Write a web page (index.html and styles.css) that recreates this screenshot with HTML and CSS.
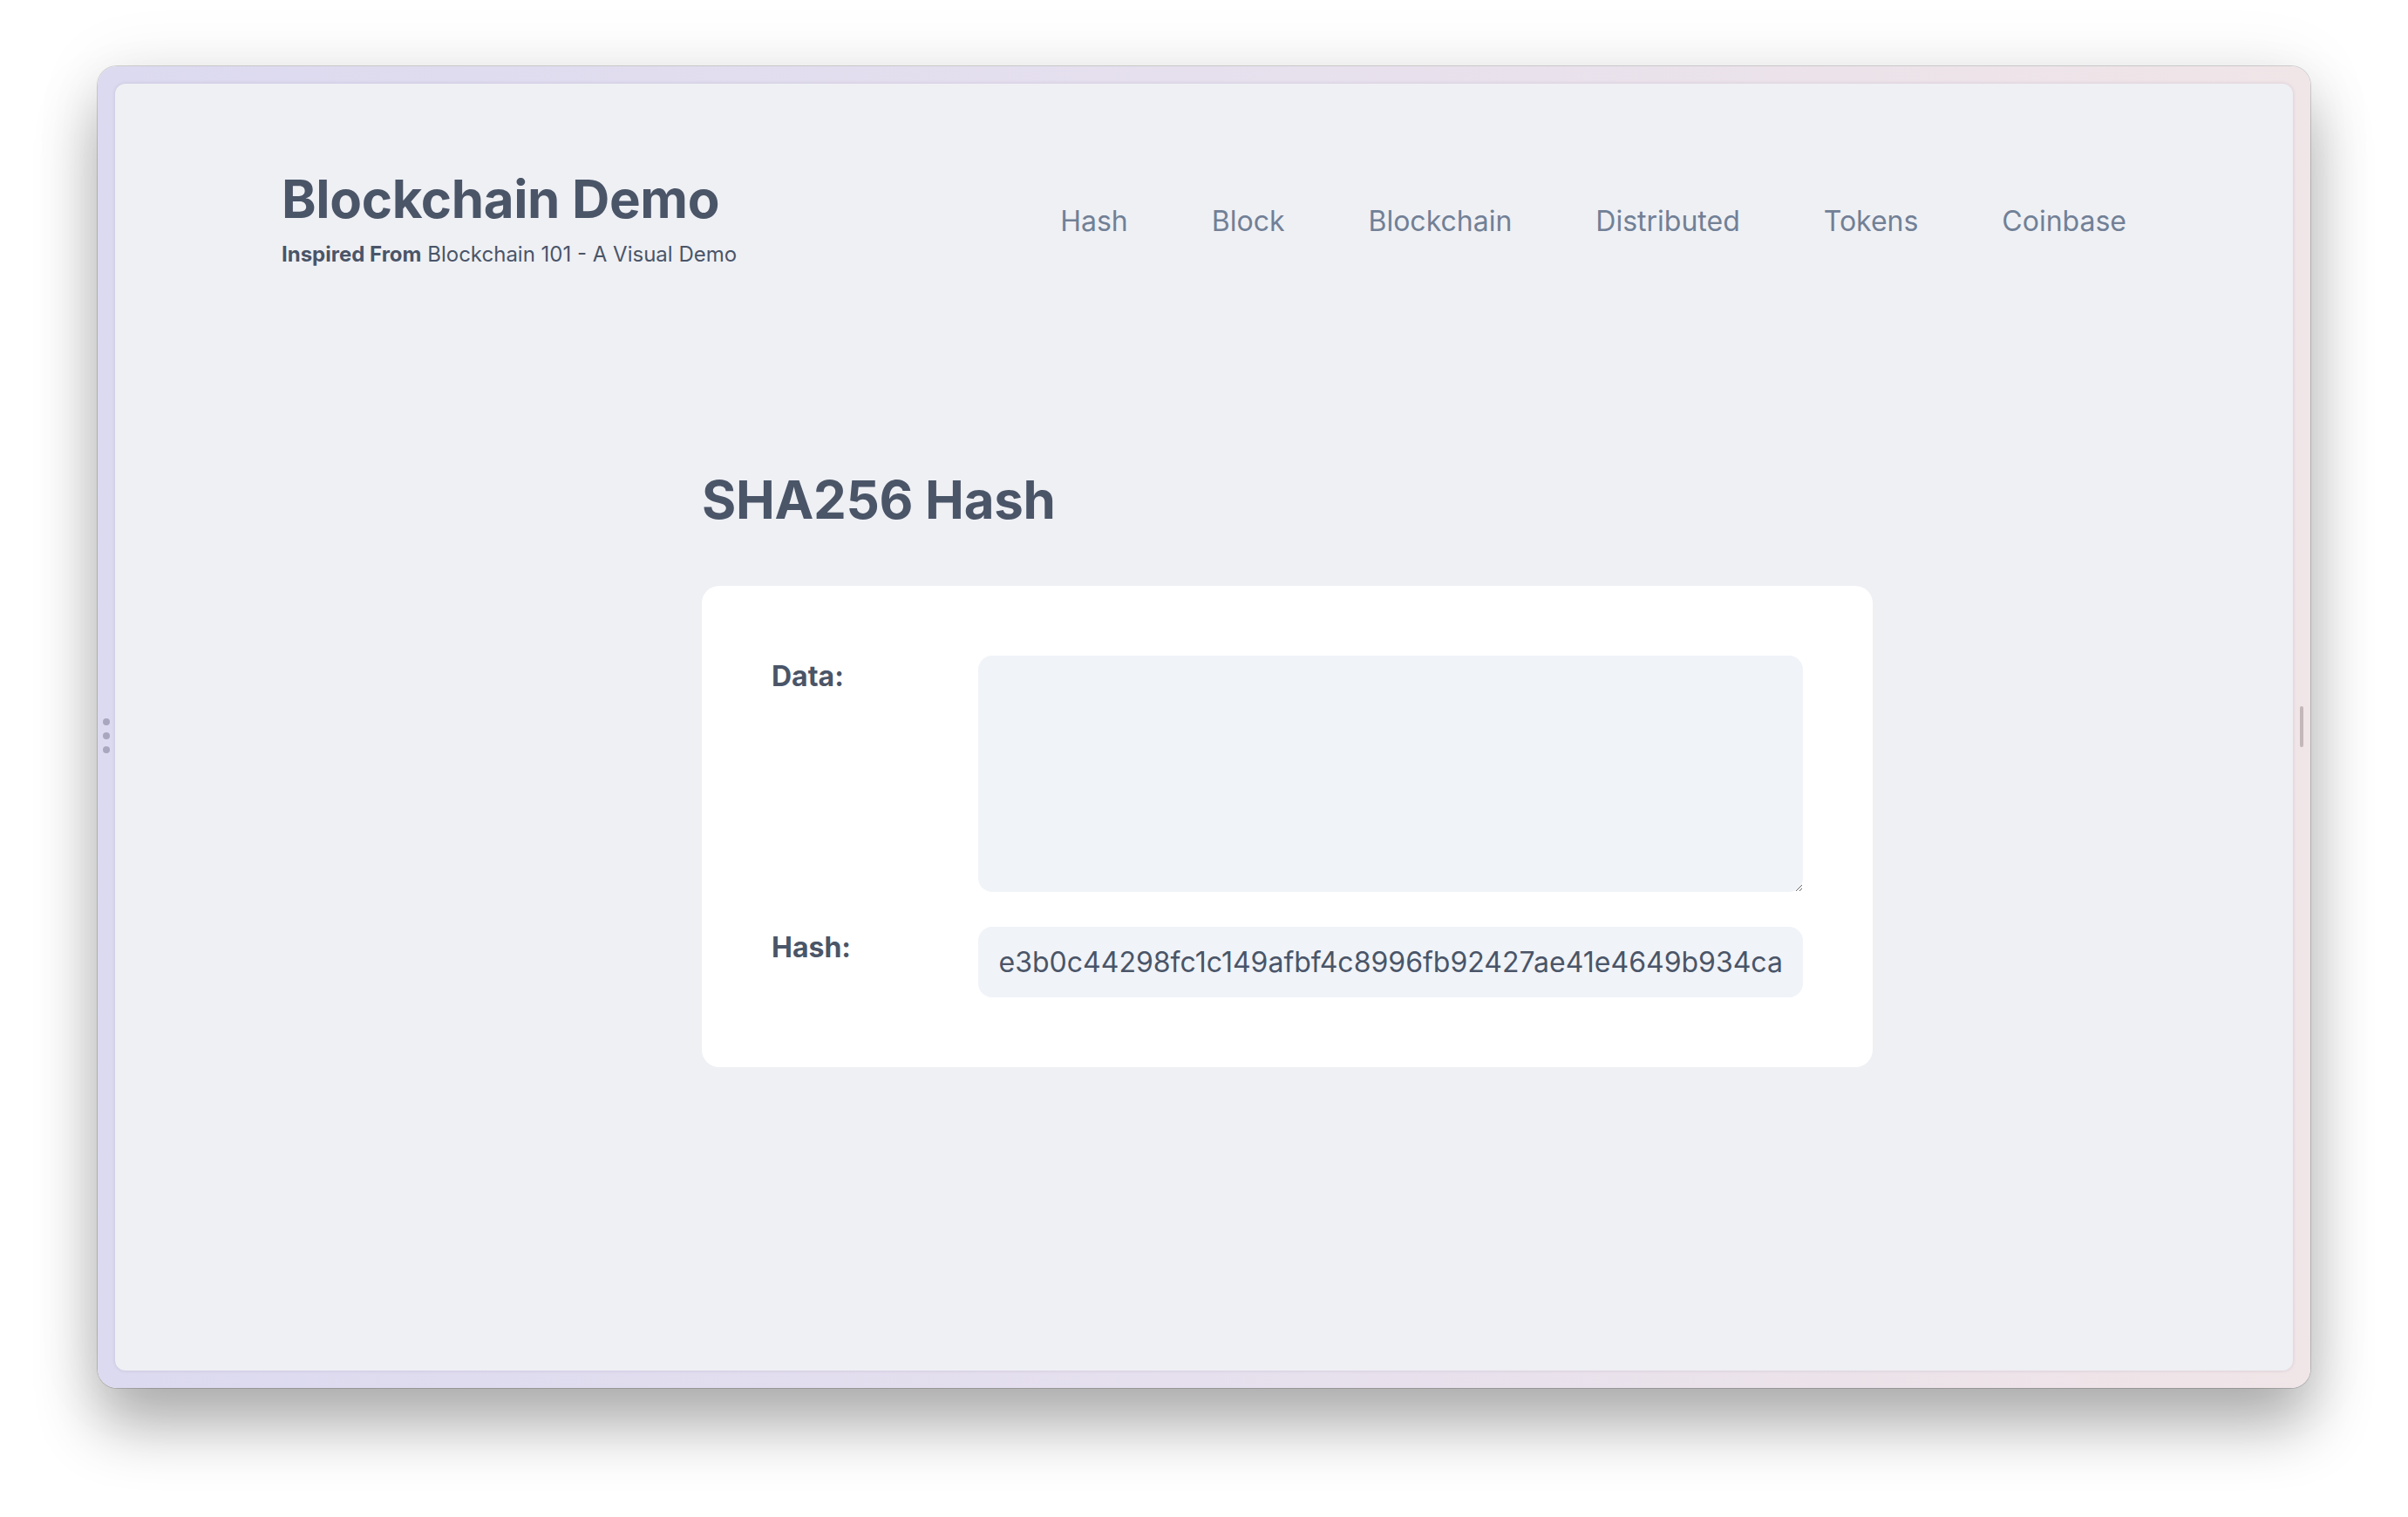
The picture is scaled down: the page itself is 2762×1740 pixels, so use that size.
FILE: index.html
```html
<!DOCTYPE html>
<html lang="en">
<head>
<meta charset="utf-8">
<title>Blockchain Demo</title>
<link rel="stylesheet" href="styles.css">
</head>
<body>
<div class="stage">
  <div class="frame">
    <div class="grip-left"><span></span><span></span><span></span></div>
    <div class="grip-right"></div>
    <div class="window">
      <div class="container">
        <header class="header">
          <div class="brand">
            <h1 class="brand-title">Blockchain Demo</h1>
            <p class="brand-sub"><strong>Inspired From</strong> Blockchain 101 - A Visual Demo</p>
          </div>
          <nav class="nav">
            <a class="nav-link">Hash</a>
            <a class="nav-link">Block</a>
            <a class="nav-link">Blockchain</a>
            <a class="nav-link">Distributed</a>
            <a class="nav-link">Tokens</a>
            <a class="nav-link">Coinbase</a>
          </nav>
        </header>
        <main class="main">
          <h2 class="page-title">SHA256 Hash</h2>
          <div class="card">
            <label class="field-label" for="data">Data:</label>
            <textarea class="field-area" id="data"></textarea>
            <label class="field-label" for="hash">Hash:</label>
            <input class="field-input" id="hash" type="text" value="e3b0c44298fc1c149afbf4c8996fb92427ae41e4649b934ca495991b7852b855">
          </div>
        </main>
      </div>
    </div>
  </div>
</div>
</body>
</html>
```

FILE: styles.css
```css
html, body {
  margin: 0;
  padding: 0;
  background: #ffffff;
}

body {
  font-family: Inter, "Noto Sans", "Liberation Sans", sans-serif;
  color: #4a5568;
}

.stage {
  width: 2762px;
  height: 1740px;
  box-sizing: border-box;
  padding: 76px 0 0 112px;
  overflow: hidden;
}

.frame {
  position: relative;
  width: 2538px;
  height: 1516px;
  box-sizing: border-box;
  padding: 20px;
  border-radius: 22px;
  background: linear-gradient(90deg, #dcdaf0 0%, #e6e0ee 50%, #f0e5e7 100%);
  box-shadow:
    0 0 0 1px rgba(0, 0, 0, 0.16),
    0 44px 70px rgba(0, 0, 0, 0.30),
    0 0 80px rgba(0, 0, 0, 0.08);
}

.grip-left {
  position: absolute;
  left: 6px;
  top: 748px;
  display: flex;
  flex-direction: column;
  gap: 8px;
}

.grip-left span {
  display: block;
  width: 8px;
  height: 8px;
  border-radius: 50%;
  background: #a9a6bf;
}

.grip-right {
  position: absolute;
  right: 8px;
  top: 734px;
  width: 4px;
  height: 47px;
  border-radius: 2px;
  background: #c3b7ba;
}

.window {
  width: 100%;
  height: 100%;
  background: #eff0f4;
  border-radius: 12px;
  box-shadow: 0 0 4px rgba(60, 50, 90, 0.14);
  overflow: hidden;
}

.container {
  width: 2116px;
  margin: 0 auto;
}

.header {
  display: flex;
  justify-content: space-between;
  align-items: center;
  padding-top: 95px;
}

.brand-title {
  margin: 0;
  font-size: 60px;
  line-height: 75px;
  font-weight: 700;
  letter-spacing: -0.35px;
  color: #4a5568;
}

.brand-sub {
  margin: 8px 0 0;
  font-size: 24px;
  line-height: 36px;
  color: #4a5568;
}

.brand-sub strong {
  font-weight: 700;
}

.nav {
  display: flex;
  gap: 96px;
  margin-top: 6px;
}

.nav-link {
  font-size: 32px;
  line-height: 48px;
  color: #718096;
  text-decoration: none;
}

.main {
  width: 1343px;
  margin-left: 482px;
  padding-top: 226px;
}

.page-title {
  margin: 0 0 61px;
  font-size: 60px;
  line-height: 75px;
  font-weight: 700;
  letter-spacing: -0.3px;
  color: #4a5568;
}

.card {
  background: #ffffff;
  border-radius: 20px;
  padding: 80px;
  display: grid;
  grid-template-columns: 1fr 4fr;
  row-gap: 40px;
}

.field-label {
  font-size: 32px;
  line-height: 48px;
  font-weight: 700;
  color: #4a5568;
}

.field-area {
  display: block;
  width: 100%;
  height: 271px;
  box-sizing: border-box;
  margin: 0;
  padding: 16px 24px;
  border: none;
  border-radius: 16px;
  background: #f0f3f8;
  font-family: Inter, "Noto Sans", sans-serif;
  font-size: 32px;
  color: #4a5568;
  resize: vertical;
  outline: none;
}

.field-input {
  display: block;
  width: 100%;
  height: 81px;
  box-sizing: border-box;
  margin: 0;
  padding: 0 24px;
  border: none;
  border-radius: 16px;
  background: #f0f3f8;
  font-family: Inter, "Noto Sans", sans-serif;
  font-size: 32px;
  color: #4a5568;
  outline: none;
}
```
